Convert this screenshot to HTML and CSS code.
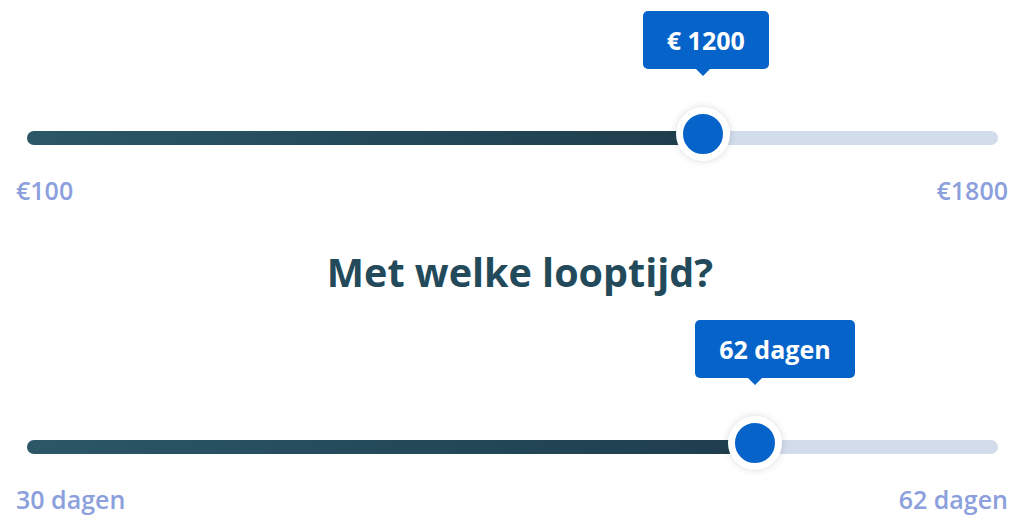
FILE: index.html
```html
<!DOCTYPE html>
<html>
<head>
<meta charset="utf-8">
<link rel="stylesheet" href="styles.css">
</head>
<body>
<div class="page">
  <div class="slider slider-first">
    <div class="track">
      <div class="fill" style="width:69.6%"></div>
      <div class="thumb" style="left:69.6%"></div>
      <div class="tip" style="left:69.6%">€ 1200</div>
    </div>
    <div class="labels"><span>€100</span><span>€1800</span></div>
  </div>
  <h2 class="heading">Met welke looptijd?</h2>
  <div class="slider slider-second">
    <div class="track">
      <div class="fill" style="width:75%"></div>
      <div class="thumb" style="left:75%"></div>
      <div class="tip" style="left:75%">62 dagen</div>
    </div>
    <div class="labels"><span>30 dagen</span><span>62 dagen</span></div>
  </div>
</div>
</body>
</html>
```
FILE: styles.css
```css
html, body {
  margin: 0;
  padding: 0;
  background: #ffffff;
}
.page {
  width: 1024px;
  height: 524px;
  padding: 0 16px;
  box-sizing: border-box;
  font-family: "Open Sans", "Liberation Sans", sans-serif;
  overflow: hidden;
}
.slider-first {
  padding-top: 131px;
}
.slider-second {
  padding-top: 144px;
}
.track {
  position: relative;
  height: 14px;
  margin: 0 10px 0 11px;
  border-radius: 7px;
  background: #d2dcea;
}
.fill {
  height: 100%;
  border-radius: 7px 0 0 7px;
  background: linear-gradient(90deg, #2b5767 0%, #244a5a 50%, #1f3d4c 100%);
}
.thumb {
  position: absolute;
  top: -24px;
  width: 40px;
  height: 40px;
  margin-left: -27px;
  border: 7px solid #ffffff;
  border-radius: 50%;
  background: #0563c9;
  box-shadow: 0 0 7px rgba(30, 50, 70, 0.18);
}
.tip {
  position: absolute;
  top: -120px;
  height: 58px;
  line-height: 58px;
  padding: 0 24px;
  margin-left: -60px;
  background: #0563c9;
  color: #ffffff;
  border-radius: 5px;
  font-size: 25px;
  font-weight: 700;
  white-space: nowrap;
}
.tip::after {
  content: "";
  position: absolute;
  left: 53px;
  bottom: -7px;
  border-left: 7px solid transparent;
  border-right: 7px solid transparent;
  border-top: 7px solid #0563c9;
}
.labels {
  display: flex;
  justify-content: space-between;
  margin-top: 30px;
  line-height: 30px;
  font-size: 25px;
  font-weight: 600;
  color: #8ba0dc;
}
.heading {
  margin: 43px 0 0;
  padding-left: 16px;
  text-align: center;
  line-height: 48px;
  font-size: 39.5px;
  font-weight: 700;
  color: #234a5a;
}
```
